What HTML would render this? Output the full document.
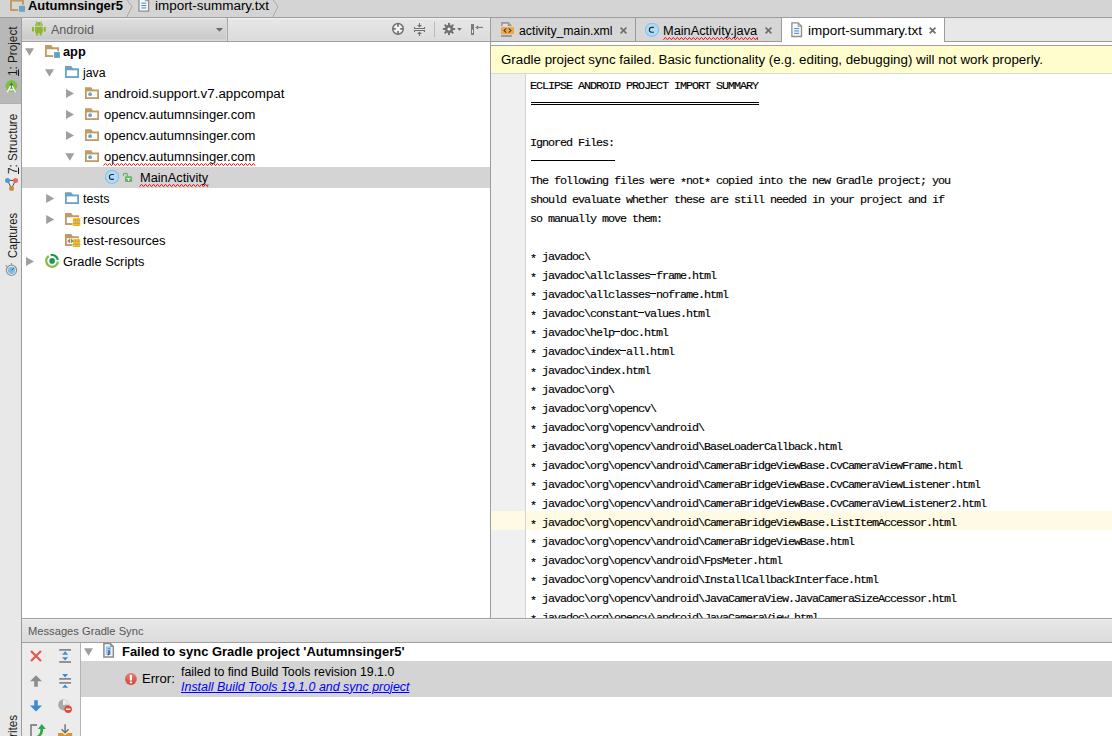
<!DOCTYPE html>
<html>
<head>
<meta charset="utf-8">
<title>Android Studio</title>
<style>
html,body{margin:0;padding:0;}
body{width:1112px;height:736px;overflow:hidden;position:relative;background:#fff;font-family:"Liberation Sans",sans-serif;font-size:12px;color:#000;}
.abs{position:absolute;}
.t{position:absolute;white-space:nowrap;line-height:16px;height:16px;transform-origin:0 50%;}
svg{position:absolute;overflow:visible;}
/* top nav bar */
#nav{left:0;top:0;width:1112px;height:17px;background:#d4d4d4;border-bottom:1px solid #9e9e9e;}
/* left strip */
#strip{left:0;top:18px;width:21px;height:718px;background:#e8e8e8;border-right:1px solid #9c9c9c;}
#strip .sel{position:absolute;left:0;top:0;width:21px;height:86px;background:#b8b8b8;border-bottom:0;box-shadow:inset 0 -1px 0 #b0b0b0;}
.vt{position:absolute;white-space:nowrap;transform-origin:0 0;font-size:12px;line-height:16px;height:16px;color:#1a1a1a;}
/* project panel */
#phead{left:22px;top:18px;width:468px;height:22px;background:linear-gradient(#f2f2f2 0,#f2f2f2 1px,#e7e7e7 1px,#dcdcdc 100%);border-bottom:1px solid #e0e0e0;}
#combo{left:22px;top:18px;width:205px;height:23px;border-right:1px solid #a8a8a8;background:linear-gradient(#ececec 0,#ececec 1px,#dfdfdf 1px,#cacaca 21px,#dadada 22px,#dadada 23px);box-shadow:inset -1px 0 0 #dcdcdc;}
#tree{left:22px;top:41px;width:468px;height:577px;background:#fff;box-shadow:inset 0 1px 0 #a0a0a0;}
#vdiv{left:490px;top:18px;width:1px;height:600px;background:#9c9c9c;}
.row{position:absolute;left:0;width:468px;height:21px;}
.rowsel{background:#d4d4d4;}
/* editor */
#tabs{left:491px;top:18px;width:621px;height:23px;background:#e8e8e8;border-bottom:1px solid #9a9a9a;}
.tab{position:absolute;top:0;height:23px;background:#d6d6d6;border-right:1px solid #9a9a9a;}
#tabact{position:absolute;left:291px;top:0;width:162px;height:24px;background:#fff;border-right:1px solid #9c9c9c;}
#bandtop{left:491px;top:42px;width:621px;height:3px;background:#fff;border-bottom:1px solid #a0a0a0;}
#banner{left:491px;top:46px;width:621px;height:27px;background:#fffdcd;border-bottom:1px solid #d8d8d8;}
#gutter{left:491px;top:74px;width:34px;height:544px;background:#f0f0f0;border-right:1px solid #d4d4d4;}
#code{left:526px;top:74px;width:586px;height:544px;overflow:hidden;}
#hl{left:491px;top:511px;width:34px;height:19px;background:#fffae3;}
#hl2{left:526px;top:511px;width:586px;height:19px;background:#fffae3;}
#codetext{position:absolute;left:4px;top:3px;margin:0;font-family:"Liberation Mono",monospace;font-size:11.75px;line-height:19px;letter-spacing:-1.05px;-webkit-text-stroke:0.15px #000;white-space:pre;color:#000;}
#codetext i{font-style:normal;position:relative;top:2px;}
#codetext b{display:inline-block;width:6px;height:1px;background:#000;vertical-align:4px;letter-spacing:0;}
.hr{position:absolute;height:1px;background:#000;}
/* messages */
#mhead{left:22px;top:618px;width:1090px;height:23px;background:linear-gradient(#f0f0f0 0,#f0f0f0 1px,#e7e7e7 1px,#dcdcdc 100%);border-top:1px solid #a0a0a0;border-bottom:1px solid #a0a0a0;}
#mtool{left:22px;top:643px;width:58px;height:93px;background:#ececec;border-right:1px solid #b4b4b4;}
#mbody{left:81px;top:643px;width:1031px;height:93px;background:#fff;}
#merr{left:81px;top:661px;width:1031px;height:36px;background:#d4d4d4;}
.wavy{position:absolute;height:3px;}
</style>
</head>
<body>
<!-- NAV -->
<div id="nav" class="abs"></div>
<!-- STRIP -->
<div id="strip" class="abs"><div class="sel"></div></div>
<!-- PROJECT -->
<div id="phead" class="abs"></div>
<div id="combo" class="abs"></div>
<div id="tree" class="abs">
  <div class="row rowsel" style="top:126px"></div>
</div>
<div id="vdiv" class="abs"></div>
<!-- EDITOR -->
<div id="tabs" class="abs">
  <div class="tab" style="left:0;width:144px"></div>
  <div class="tab" style="left:145px;width:145px"></div>
  <div id="tabact"></div>
</div>
<div id="bandtop" class="abs"></div>
<div id="banner" class="abs"></div>
<div id="gutter" class="abs"></div>
<div id="hl" class="abs"></div><div id="hl2" class="abs"></div>
<div id="code" class="abs"><pre id="codetext">ECLIPSE ANDROID PROJECT IMPORT SUMMARY


Ignored Files:

The following files were <i>*</i>not<i>*</i> copied into the new Gradle project; you
should evaluate whether these are still needed in your project and if
so manually move them:

<i>*</i> javadoc\
<i>*</i> javadoc\allclasses<b></b>frame.html
<i>*</i> javadoc\allclasses<b></b>noframe.html
<i>*</i> javadoc\constant<b></b>values.html
<i>*</i> javadoc\help<b></b>doc.html
<i>*</i> javadoc\index<b></b>all.html
<i>*</i> javadoc\index.html
<i>*</i> javadoc\org\
<i>*</i> javadoc\org\opencv\
<i>*</i> javadoc\org\opencv\android\
<i>*</i> javadoc\org\opencv\android\BaseLoaderCallback.html
<i>*</i> javadoc\org\opencv\android\CameraBridgeViewBase.CvCameraViewFrame.html
<i>*</i> javadoc\org\opencv\android\CameraBridgeViewBase.CvCameraViewListener.html
<i>*</i> javadoc\org\opencv\android\CameraBridgeViewBase.CvCameraViewListener2.html
<i>*</i> javadoc\org\opencv\android\CameraBridgeViewBase.ListItemAccessor.html
<i>*</i> javadoc\org\opencv\android\CameraBridgeViewBase.html
<i>*</i> javadoc\org\opencv\android\FpsMeter.html
<i>*</i> javadoc\org\opencv\android\InstallCallbackInterface.html
<i>*</i> javadoc\org\opencv\android\JavaCameraView.JavaCameraSizeAccessor.html
<i>*</i> javadoc\org\opencv\android\JavaCameraView.html
</pre>
<div class="hr" style="left:5px;top:28px;width:228px"></div>
<div class="hr" style="left:5px;top:30px;width:228px"></div>
<div class="hr" style="left:5px;top:86px;width:84px"></div>
</div>
<!-- MESSAGES -->
<div id="mhead" class="abs"></div>
<div id="mtool" class="abs"></div>
<div id="mbody" class="abs"></div>
<div id="merr" class="abs"></div>
<!-- TEXTS -->
<div class="t" style="left:28.2px;top:-2.33px;font-size:12.5px;font-weight:bold;font-style:normal;color:#000;transform:scaleX(1.0361);">Autumnsinger5</div>
<div class="t" style="left:155.0px;top:-2.33px;font-size:12.5px;font-weight:normal;font-style:normal;color:#000;transform:scaleX(1.0752);">import-summary.txt</div>
<div class="t" style="left:51.2px;top:21.67px;font-size:12.5px;font-weight:normal;font-style:normal;color:#5a5a5a;transform:scaleX(0.9978);">Android</div>
<div class="t" style="left:63.3px;top:43.67px;font-size:12.5px;font-weight:bold;font-style:normal;color:#000;transform:scaleX(1.0209);">app</div>
<div class="t" style="left:83.0px;top:64.67px;font-size:12.5px;font-weight:normal;font-style:normal;color:#000;transform:scaleX(0.9853);">java</div>
<div class="t" style="left:103.5px;top:85.67px;font-size:12.5px;font-weight:normal;font-style:normal;color:#000;transform:scaleX(1.0688);">android.support.v7.appcompat</div>
<div class="t" style="left:103.5px;top:106.67px;font-size:12.5px;font-weight:normal;font-style:normal;color:#000;transform:scaleX(1.0434);">opencv.autumnsinger.com</div>
<div class="t" style="left:103.5px;top:127.67px;font-size:12.5px;font-weight:normal;font-style:normal;color:#000;transform:scaleX(1.0434);">opencv.autumnsinger.com</div>
<div class="t" style="left:103.5px;top:148.67px;font-size:12.5px;font-weight:normal;font-style:normal;color:#000;transform:scaleX(1.0434);">opencv.autumnsinger.com</div>
<div class="t" style="left:139.6px;top:169.67px;font-size:12.5px;font-weight:normal;font-style:normal;color:#000;transform:scaleX(1.0227);">MainActivity</div>
<div class="t" style="left:83.0px;top:190.67px;font-size:12.5px;font-weight:normal;font-style:normal;color:#000;transform:scaleX(0.9998);">tests</div>
<div class="t" style="left:83.0px;top:211.67px;font-size:12.5px;font-weight:normal;font-style:normal;color:#000;transform:scaleX(1.0311);">resources</div>
<div class="t" style="left:83.0px;top:232.67px;font-size:12.5px;font-weight:normal;font-style:normal;color:#000;transform:scaleX(1.0429);">test-resources</div>
<div class="t" style="left:63.3px;top:253.67px;font-size:12.5px;font-weight:normal;font-style:normal;color:#000;transform:scaleX(1.0277);">Gradle Scripts</div>
<div class="t" style="left:518.8px;top:22.67px;font-size:12.5px;font-weight:normal;font-style:normal;color:#000;transform:scaleX(0.9824);">activity_main.xml</div>
<div class="t" style="left:663.4px;top:22.67px;font-size:12.5px;font-weight:normal;font-style:normal;color:#000;transform:scaleX(1.0220);">MainActivity.java</div>
<div class="t" style="left:808.0px;top:22.67px;font-size:12.5px;font-weight:normal;font-style:normal;color:#000;transform:scaleX(1.0752);">import-summary.txt</div>
<div class="t" style="left:501.2px;top:51.67px;font-size:12.5px;font-weight:normal;font-style:normal;color:#000;transform:scaleX(1.0647);">Gradle project sync failed. Basic functionality (e.g. editing, debugging) will not work properly.</div>
<div class="t" style="left:27.5px;top:623.36px;font-size:10.5px;font-weight:normal;font-style:normal;color:#565656;transform:scaleX(1.0639);">Messages Gradle Sync</div>
<div class="t" style="left:121.9px;top:643.67px;font-size:12.5px;font-weight:bold;font-style:normal;color:#000;transform:scaleX(1.0360);">Failed to sync Gradle project 'Autumnsinger5'</div>
<div class="t" style="left:141.8px;top:670.67px;font-size:12.5px;font-weight:normal;font-style:normal;color:#000;transform:scaleX(1.0496);">Error:</div>
<div class="t" style="left:181.2px;top:663.67px;font-size:12.5px;font-weight:normal;font-style:normal;color:#000;transform:scaleX(0.9880);">failed to find Build Tools revision 19.1.0</div>
<div class="t" style="left:181.2px;top:678.67px;font-size:12.5px;font-weight:normal;font-style:italic;color:#0000ff;transform:scaleX(0.9954);text-decoration:underline;">Install Build Tools 19.1.0 and sync project</div>
<div class="vt" style="left:4.64px;top:76.3px;transform:rotate(-90deg) scaleX(0.9763);"><u>1</u>: Project</div>
<div class="vt" style="left:4.64px;top:173.6px;transform:rotate(-90deg) scaleX(0.9705);"><u>7</u>: Structure</div>
<div class="vt" style="left:4.64px;top:258.0px;transform:rotate(-90deg) scaleX(0.9240);">Captures</div>
<div class="vt" style="left:4.64px;top:775.9px;transform:rotate(-90deg) scaleX(0.9763);"><u>2</u>: Favorites</div>
<!-- ICONS -->
<svg width="1112" height="736" viewBox="0 0 1112 736" style="left:0;top:0"><path d="M10 -3h6.5l1.6 2.6h5.9v11.4h-14z" fill="#c29a63"/>
<rect x="12" y="1.6" width="10" height="7.4" fill="#d6d6d6"/>
<rect x="18" y="4.8" width="8" height="8" fill="#d6d6d6"/>
<rect x="19" y="5.8" width="6" height="6" fill="#68a4cc"/>
<path d="M126.5 -1l5.5 7.5l-5.5 11" fill="none" stroke="#a8a8a8" stroke-width="1"/>
<path d="M272.5 -1l5.5 7.5l-5.5 11" fill="none" stroke="#a8a8a8" stroke-width="1"/>
<path d="M139.0 -2.5h6.3l3.3 3.3v10.3h-9.6z" fill="#fafafa" stroke="#8e8e8e" stroke-width="1.3"/><path d="M145.3 -2.5v3.3h3.3" fill="none" stroke="#8e8e8e" stroke-width="1"/><rect x="141.3" y="2.5999999999999996" width="5" height="1.1" fill="#4a90c8"/><rect x="141.3" y="5.0" width="5" height="1.1" fill="#4a90c8"/><rect x="141.3" y="7.3999999999999995" width="5" height="1.1" fill="#4a90c8"/>
<circle cx="11.4" cy="85.8" r="5.9" fill="#7cc043"/>
<path d="M11.4 82.2l1.5 2.6l-1.5 3.6l-1.5 -3.6z" fill="#5c6a55"/>
<path d="M7.3 92.2l3.4 -6.4M15.5 92.2l-3.4 -6.4M8.9 89.3q2.5 1.4 5 0" fill="none" stroke="#f6f6f6" stroke-width="1.3"/>
<path d="M7.5 180.4h8L11.5 188.5z" fill="none" stroke="#505050" stroke-width="1"/>
<circle cx="7.5" cy="180.4" r="2.5" fill="#4f98d6"/><circle cx="15.5" cy="180.4" r="2.5" fill="#e06a63"/><circle cx="11.5" cy="188.5" r="2.5" fill="#d08c3c"/>
<circle cx="11.5" cy="270.3" r="5.1" fill="#f2f2f2" stroke="#929292" stroke-width="1.3"/>
<circle cx="11.5" cy="270.3" r="3.6" fill="#74bdee"/>
<path d="M11.5 270.3l2.4 -2.4" stroke="#555" stroke-width="1"/>
<path d="M11.5 265v-2M5.6 265.2l1.6 1.4" stroke="#9a9a9a" stroke-width="1.2"/>
<path d="M35.0 25.8a3.9 3.9 0 0 1 7.8 0z" fill="#8db531"/><path d="M36.2 21.1l1 1.6M41.6 21.1l-1 1.6" stroke="#8db531" stroke-width="0.8"/><circle cx="37.2" cy="24.0" r="0.55" fill="#e8f0d0"/><circle cx="40.6" cy="24.0" r="0.55" fill="#e8f0d0"/><path d="M35.0 26.700000000000003h7.8v5.4a0.8 0.8 0 0 1 -0.8 0.8h-6.2a0.8 0.8 0 0 1 -0.8 -0.8z" fill="#8db531"/><rect x="32.0" y="26.700000000000003" width="2" height="5" rx="1" fill="#8db531"/><rect x="43.8" y="26.700000000000003" width="2" height="5" rx="1" fill="#8db531"/><rect x="36.1" y="32.3" width="2" height="3.3" rx="0.9" fill="#8db531"/><rect x="39.7" y="32.3" width="2" height="3.3" rx="0.9" fill="#8db531"/>
<path d="M215.9 27.9h7.2l-3.6 3.9z" fill="#6a6a6a"/>
<circle cx="398" cy="28.9" r="5.3" fill="#f3f3f3" stroke="#747474" stroke-width="1.5"/>
<path d="M398 23.6v3.1M398 34.2v-3.1M392.7 28.9h3.1M403.3 28.9h-3.1" stroke="#747474" stroke-width="1.8"/>
<path d="M414.5 27v1.5h10v-1.5M414.5 32v-1.5h10v1.5" stroke="#727272" stroke-width="1.1" fill="none"/>
<path d="M419.5 23v3M419.5 36v-3" stroke="#727272" stroke-width="1.1" fill="none"/>
<path d="M417 25h5l-2.5 2.5zM417 34h5l-2.5 -2.5z" fill="#727272"/>
<rect x="434" y="21.5" width="1" height="15.5" fill="#b9b9b9"/>
<rect x="448.05" y="22.9" width="1.9" height="12.2" fill="#707070" transform="rotate(0 449 29)"/><rect x="448.05" y="22.9" width="1.9" height="12.2" fill="#707070" transform="rotate(45 449 29)"/><rect x="448.05" y="22.9" width="1.9" height="12.2" fill="#707070" transform="rotate(90 449 29)"/><rect x="448.05" y="22.9" width="1.9" height="12.2" fill="#707070" transform="rotate(135 449 29)"/>
<circle cx="449" cy="29" r="4.1" fill="#707070"/><circle cx="449" cy="29" r="1.6" fill="#f4f4f4"/>
<path d="M457.1 28.1h4.8l-2.4 2.7z" fill="#707070"/>
<rect x="471.5" y="24.8" width="2" height="9.6" fill="#f0f0f0" stroke="#7a7a7a" stroke-width="1"/>
<rect x="471" y="24.3" width="3" height="5.4" fill="#7a7a7a"/>
<path d="M477 27.4h6" stroke="#7a7a7a" stroke-width="1.1" fill="none"/>
<path d="M475.2 27.4l3 -2.2v4.4z" fill="#7a7a7a"/>
<path d="M25 48.3h9l-4.5 7.5z" fill="#9f9f9f"/>
<path d="M45 45.1h6.2l1.6 2.2h6.2v9.6h-14z" fill="#c29a63"/><rect x="46.8" y="49.300000000000004" width="10.4" height="5.8" fill="#fff"/><rect x="53.2" y="51.300000000000004" width="7.6" height="6.6" fill="#fff"/><rect x="54.1" y="52.1" width="5.8" height="5.8" fill="#62a0c8"/>
<path d="M45 69.3h9l-4.5 7.5z" fill="#9f9f9f"/>
<path d="M65 66.1h6.2l1.6 2.2h6.2v9.6h-14z" fill="#6aa3c8"/><rect x="66.8" y="70.3" width="10.4" height="5.8" fill="#fff"/>
<path d="M66 89v9l8 -4.5z" fill="#9f9f9f"/>
<path d="M85 87.2h6.2l1.6 2.2h6.2v9.6h-14z" fill="#c29a63"/><rect x="86.8" y="91.4" width="10.4" height="5.8" fill="#fff"/><circle cx="90.1" cy="94.2" r="1.9" fill="#6aa3c8"/>
<path d="M66 110v9l8 -4.5z" fill="#9f9f9f"/>
<path d="M85 108.2h6.2l1.6 2.2h6.2v9.6h-14z" fill="#c29a63"/><rect x="86.8" y="112.4" width="10.4" height="5.8" fill="#fff"/><circle cx="90.1" cy="115.2" r="1.9" fill="#6aa3c8"/>
<path d="M66 131v9l8 -4.5z" fill="#9f9f9f"/>
<path d="M85 129.2h6.2l1.6 2.2h6.2v9.6h-14z" fill="#c29a63"/><rect x="86.8" y="133.39999999999998" width="10.4" height="5.8" fill="#fff"/><circle cx="90.1" cy="136.2" r="1.9" fill="#6aa3c8"/>
<path d="M65.3 153.3h9l-4.5 7.5z" fill="#9f9f9f"/>
<path d="M85 150.2h6.2l1.6 2.2h6.2v9.6h-14z" fill="#c29a63"/><rect x="86.8" y="154.39999999999998" width="10.4" height="5.8" fill="#fff"/><circle cx="90.1" cy="157.2" r="1.9" fill="#6aa3c8"/>
<circle cx="112.05" cy="176.9" r="6.6" fill="#aedbf8" stroke="#84c2ee" stroke-width="1.1"/><path d="M113.95 174.45000000000002h-2.3a2.2 2.2 0 0 0 -2.2 2.2v0.5a2.2 2.2 0 0 0 2.2 2.2h2.3" fill="none" stroke="#2e2e2e" stroke-width="1.15"/>
<rect x="125" y="176.2" width="7.1" height="5.9" rx="1.1" fill="#62b567"/><path d="M123.45 176v-1.1a1.5 1.5 0 0 1 1.5 -1.5h1a1.5 1.5 0 0 1 1.5 1.5v1.6" fill="none" stroke="#62b567" stroke-width="1.2"/><rect x="126.7" y="178" width="3.7" height="1.1" fill="#e2f4e2"/><rect x="128" y="178" width="1.1" height="3" fill="#e2f4e2"/>
<path d="M46.2 194v9l8 -4.5z" fill="#9f9f9f"/>
<path d="M65 192.2h6.2l1.6 2.2h6.2v9.6h-14z" fill="#6aa3c8"/><rect x="66.8" y="196.39999999999998" width="10.4" height="5.8" fill="#fff"/>
<path d="M46.2 215v9l8 -4.5z" fill="#9f9f9f"/>
<path d="M65 213.1h6.2l1.6 2.2h6.2v9.6h-14z" fill="#c29a63"/><rect x="66.8" y="217.29999999999998" width="10.4" height="5.8" fill="#fff"/>
<rect x="72.6" y="217.4" width="8.2" height="9" fill="#fff"/>
<rect x="72.9" y="218" width="7.3" height="8" fill="#f5b50a"/><rect x="72.9" y="218.3" width="7.3" height="0.8" fill="#fbd24a"/><rect x="72.9" y="221.2" width="7.3" height="0.7" fill="#fbd24a"/><rect x="72.9" y="224.1" width="7.3" height="0.7" fill="#fbd24a"/><rect x="72.9" y="220.2" width="7.3" height="0.9" fill="#a3a8ad"/><rect x="72.9" y="223.2" width="7.3" height="0.9" fill="#a3a8ad"/><rect x="75.2" y="218" width="0.6" height="8" fill="#d99208" opacity="0.55"/><rect x="77.7" y="218" width="0.6" height="8" fill="#d99208" opacity="0.55"/>
<path d="M65 234.1h6.2l1.6 2.2h6.2v9.6h-14z" fill="#c29a63"/><rect x="66.8" y="238.29999999999998" width="10.4" height="5.8" fill="#fff"/>
<rect x="72.6" y="238.4" width="8.2" height="9" fill="#fff"/>
<path d="M70.1 238.5v4.8l-3 -2.4z" fill="#e0645c"/><path d="M70.9 238.5v4.8l3.1 -2.4z" fill="#3fb34f"/>
<rect x="72.9" y="239" width="7.3" height="8" fill="#f5b50a"/><rect x="72.9" y="239.3" width="7.3" height="0.8" fill="#fbd24a"/><rect x="72.9" y="242.2" width="7.3" height="0.7" fill="#fbd24a"/><rect x="72.9" y="245.1" width="7.3" height="0.7" fill="#fbd24a"/><rect x="72.9" y="241.2" width="7.3" height="0.9" fill="#a3a8ad"/><rect x="72.9" y="244.2" width="7.3" height="0.9" fill="#a3a8ad"/><rect x="75.2" y="239" width="0.6" height="8" fill="#d99208" opacity="0.55"/><rect x="77.7" y="239" width="0.6" height="8" fill="#d99208" opacity="0.55"/>
<path d="M26 257v9l8 -4.5z" fill="#9f9f9f"/>
<circle cx="52.1" cy="260.9" r="2.8" fill="#169a52"/><path d="M57.94 261.72A5.9 5.9 0 1 1 48.80 256.01" fill="none" stroke="#8cba4c" stroke-width="2.2"/><path d="M50.67 255.18A5.9 5.9 0 0 1 57.91 259.88" fill="none" stroke="#169a52" stroke-width="2.2"/>
<path d="M103.5 165.7L105.5 163.3L107.5 165.7L109.5 163.3L111.5 165.7L113.5 163.3L115.5 165.7L117.5 163.3L119.5 165.7L121.5 163.3L123.5 165.7L125.5 163.3L127.5 165.7L129.5 163.3L131.5 165.7L133.5 163.3L135.5 165.7L137.5 163.3L139.5 165.7L141.5 163.3L143.5 165.7L145.5 163.3L147.5 165.7L149.5 163.3L151.5 165.7L153.5 163.3L155.5 165.7L157.5 163.3L159.5 165.7L161.5 163.3L163.5 165.7L165.5 163.3L167.5 165.7L169.5 163.3L171.5 165.7L173.5 163.3L175.5 165.7L177.5 163.3L179.5 165.7L181.5 163.3L183.5 165.7L185.5 163.3L187.5 165.7L189.5 163.3L191.5 165.7L193.5 163.3L195.5 165.7L197.5 163.3L199.5 165.7L201.5 163.3L203.5 165.7L205.5 163.3L207.5 165.7L209.5 163.3L211.5 165.7L213.5 163.3L215.5 165.7L217.5 163.3L219.5 165.7L221.5 163.3L223.5 165.7L225.5 163.3L227.5 165.7L229.5 163.3L231.5 165.7L233.5 163.3L235.5 165.7L237.5 163.3L239.5 165.7L241.5 163.3L243.5 165.7L245.5 163.3L247.5 165.7L249.5 163.3L251.5 165.7L253.5 163.3L255 165.7" fill="none" stroke="#f01818" stroke-width="1"/>
<path d="M139.5 186.7L141.5 184.3L143.5 186.7L145.5 184.3L147.5 186.7L149.5 184.3L151.5 186.7L153.5 184.3L155.5 186.7L157.5 184.3L159.5 186.7L161.5 184.3L163.5 186.7L165.5 184.3L167.5 186.7L169.5 184.3L171.5 186.7L173.5 184.3L175.5 186.7L177.5 184.3L179.5 186.7L181.5 184.3L183.5 186.7L185.5 184.3L187.5 186.7L189.5 184.3L191.5 186.7L193.5 184.3L195.5 186.7L197.5 184.3L199.5 186.7L201.5 184.3L203.5 186.7L205.5 184.3L207.5 186.7L208 184.3" fill="none" stroke="#f01818" stroke-width="1"/>
<path d="M501 22.1h7.6l3.3 3.3v0.7h-10.9z" fill="#9b9b9b"/><rect x="502.6" y="23.8" width="5" height="2.3" fill="#e2e2e2"/><rect x="501" y="27.1" width="13" height="6.9" fill="#f4a83c"/><path d="M506.3 28.400000000000002l-2.3 2.1l2.3 2.1M508.7 28.400000000000002l2.3 2.1l-2.3 2.1" fill="none" stroke="#4a4038" stroke-width="1.15"/><rect x="501" y="34.900000000000006" width="10.9" height="2.1" fill="#9b9b9b"/>
<path d="M620.6 27.6l5.8 5.8M626.4 27.6l-5.8 5.8" stroke="#707070" stroke-width="1.7" fill="none"/>
<circle cx="652" cy="29.8" r="6.6" fill="#aedbf8" stroke="#84c2ee" stroke-width="1.1"/><path d="M653.9 27.35h-2.3a2.2 2.2 0 0 0 -2.2 2.2v0.5a2.2 2.2 0 0 0 2.2 2.2h2.3" fill="none" stroke="#2e2e2e" stroke-width="1.15"/>
<path d="M765.6 27.6l5.8 5.8M771.4 27.6l-5.8 5.8" stroke="#707070" stroke-width="1.7" fill="none"/>
<path d="M663.4 39.800000000000004L665.4 37.4L667.4 39.800000000000004L669.4 37.4L671.4 39.800000000000004L673.4 37.4L675.4 39.800000000000004L677.4 37.4L679.4 39.800000000000004L681.4 37.4L683.4 39.800000000000004L685.4 37.4L687.4 39.800000000000004L689.4 37.4L691.4 39.800000000000004L693.4 37.4L695.4 39.800000000000004L697.4 37.4L699.4 39.800000000000004L701.4 37.4L703.4 39.800000000000004L705.4 37.4L707.4 39.800000000000004L709.4 37.4L711.4 39.800000000000004L713.4 37.4L715.4 39.800000000000004L717.4 37.4L719.4 39.800000000000004L721.4 37.4L723.4 39.800000000000004L725.4 37.4L727.4 39.800000000000004L729.4 37.4L731.4 39.800000000000004L733.4 37.4L735.4 39.800000000000004L737.4 37.4L739.4 39.800000000000004L741.4 37.4L743.4 39.800000000000004L745.4 37.4L747.4 39.800000000000004L749.4 37.4L751.4 39.800000000000004L753.4 37.4L755.4 39.800000000000004L757.4 37.4L757.6 39.800000000000004" fill="none" stroke="#f01818" stroke-width="1"/>
<path d="M791.9000000000001 22.9h6.3l3.3 3.3v10.3h-9.6z" fill="#fafafa" stroke="#8e8e8e" stroke-width="1.3"/><path d="M798.2 22.9v3.3h3.3" fill="none" stroke="#8e8e8e" stroke-width="1"/><rect x="794.2" y="28.0" width="5" height="1.1" fill="#4a90c8"/><rect x="794.2" y="30.4" width="5" height="1.1" fill="#4a90c8"/><rect x="794.2" y="32.8" width="5" height="1.1" fill="#4a90c8"/>
<path d="M929.7 27.6l5.8 5.8M935.5 27.6l-5.8 5.8" stroke="#707070" stroke-width="1.7" fill="none"/></svg>
<svg width="1112" height="736" viewBox="0 0 1112 736" style="left:0;top:0"><path d="M31 651l10 10M41 651l-10 10" stroke="#e05a4e" stroke-width="2.2" fill="none"/>
<rect x="59.2" y="649.2" width="11.8" height="1.4" fill="#6e6e6e"/><rect x="59.2" y="661.3" width="11.8" height="1.4" fill="#6e6e6e"/>
<path d="M65.1 651.3l3 3.4h-6zM65.1 660.6l3 -3.4h-6z" fill="#3d8cd2"/>
<path d="M36 675.2l6 6h-4.2v5.6h-3.6v-5.6h-4.2z" fill="#8c8c8c"/>
<rect x="59.2" y="678.2" width="11.8" height="1.4" fill="#6e6e6e"/><rect x="59.2" y="682.2" width="11.8" height="1.4" fill="#6e6e6e"/>
<path d="M65.1 677.4l3 -3.4h-6zM65.1 684.4l3 3.4h-6z" fill="#3d8cd2"/>
<path d="M36 711.6l6 -6h-4.2v-5.4h-3.6v5.4h-4.2z" fill="#3d8cd2"/>
<circle cx="63.8" cy="704.8" r="5.6" fill="#a9a9a9"/>
<path d="M63.8 704.8v-5.6a5.6 5.6 0 0 1 5.6 5.6z" fill="#e4e4e4"/>
<path d="M63.8 700v5" stroke="#fff" stroke-width="1.2"/>
<circle cx="68.2" cy="709.2" r="3.7" fill="#dd4a40"/><rect x="66" y="708.5" width="4.4" height="1.4" fill="#fff"/>
<path d="M37 725h-6v12" fill="none" stroke="#6e6e6e" stroke-width="1.4"/>
<path d="M36.2 736q4.2 -1 4.2 -7h-2.6l4 -5l4 5h-2.6q0 7 -5 8z" fill="#2fa84a"/>
<path d="M65.1 724.2v8M61.6 729.2l3.5 3.6l3.5 -3.6" fill="none" stroke="#6e6e6e" stroke-width="1.4"/>
<path d="M58 733h4.5l2.6 2.2l2.6 -2.2h4.5v4h-14.2z" fill="#d8952f"/>
<path d="M84 648.2h9l-4.5 7.6z" fill="#9f9f9f"/>
<path d="M103.9 643.6h6.4l3 3v10.4h-9.4z" fill="#fbfbfb" stroke="#8a8a8a" stroke-width="1.5"/>
<path d="M110.4 643.5v3h3" fill="none" stroke="#8c8c8c" stroke-width="0.9"/>
<rect x="105.8" y="646.2" width="5.4" height="8.6" fill="#9ccaf6"/>
<path d="M109 648.2v0.9M109 650.2v3.6q0 1 -1.4 0.9" stroke="#2a2a50" stroke-width="1.1" fill="none"/>
<defs><linearGradient id="eg" x1="0" y1="0" x2="0" y2="1"><stop offset="0" stop-color="#ea7a70"/><stop offset="1" stop-color="#d4463d"/></linearGradient></defs><circle cx="130.9" cy="679" r="5.9" fill="url(#eg)"/>
<rect x="129.8" y="674.7" width="2.2" height="5.9" rx="0.7" fill="#fff"/><rect x="129.8" y="681.4" width="2.2" height="1.9" rx="0.6" fill="#fff"/></svg>
</body>
</html>
